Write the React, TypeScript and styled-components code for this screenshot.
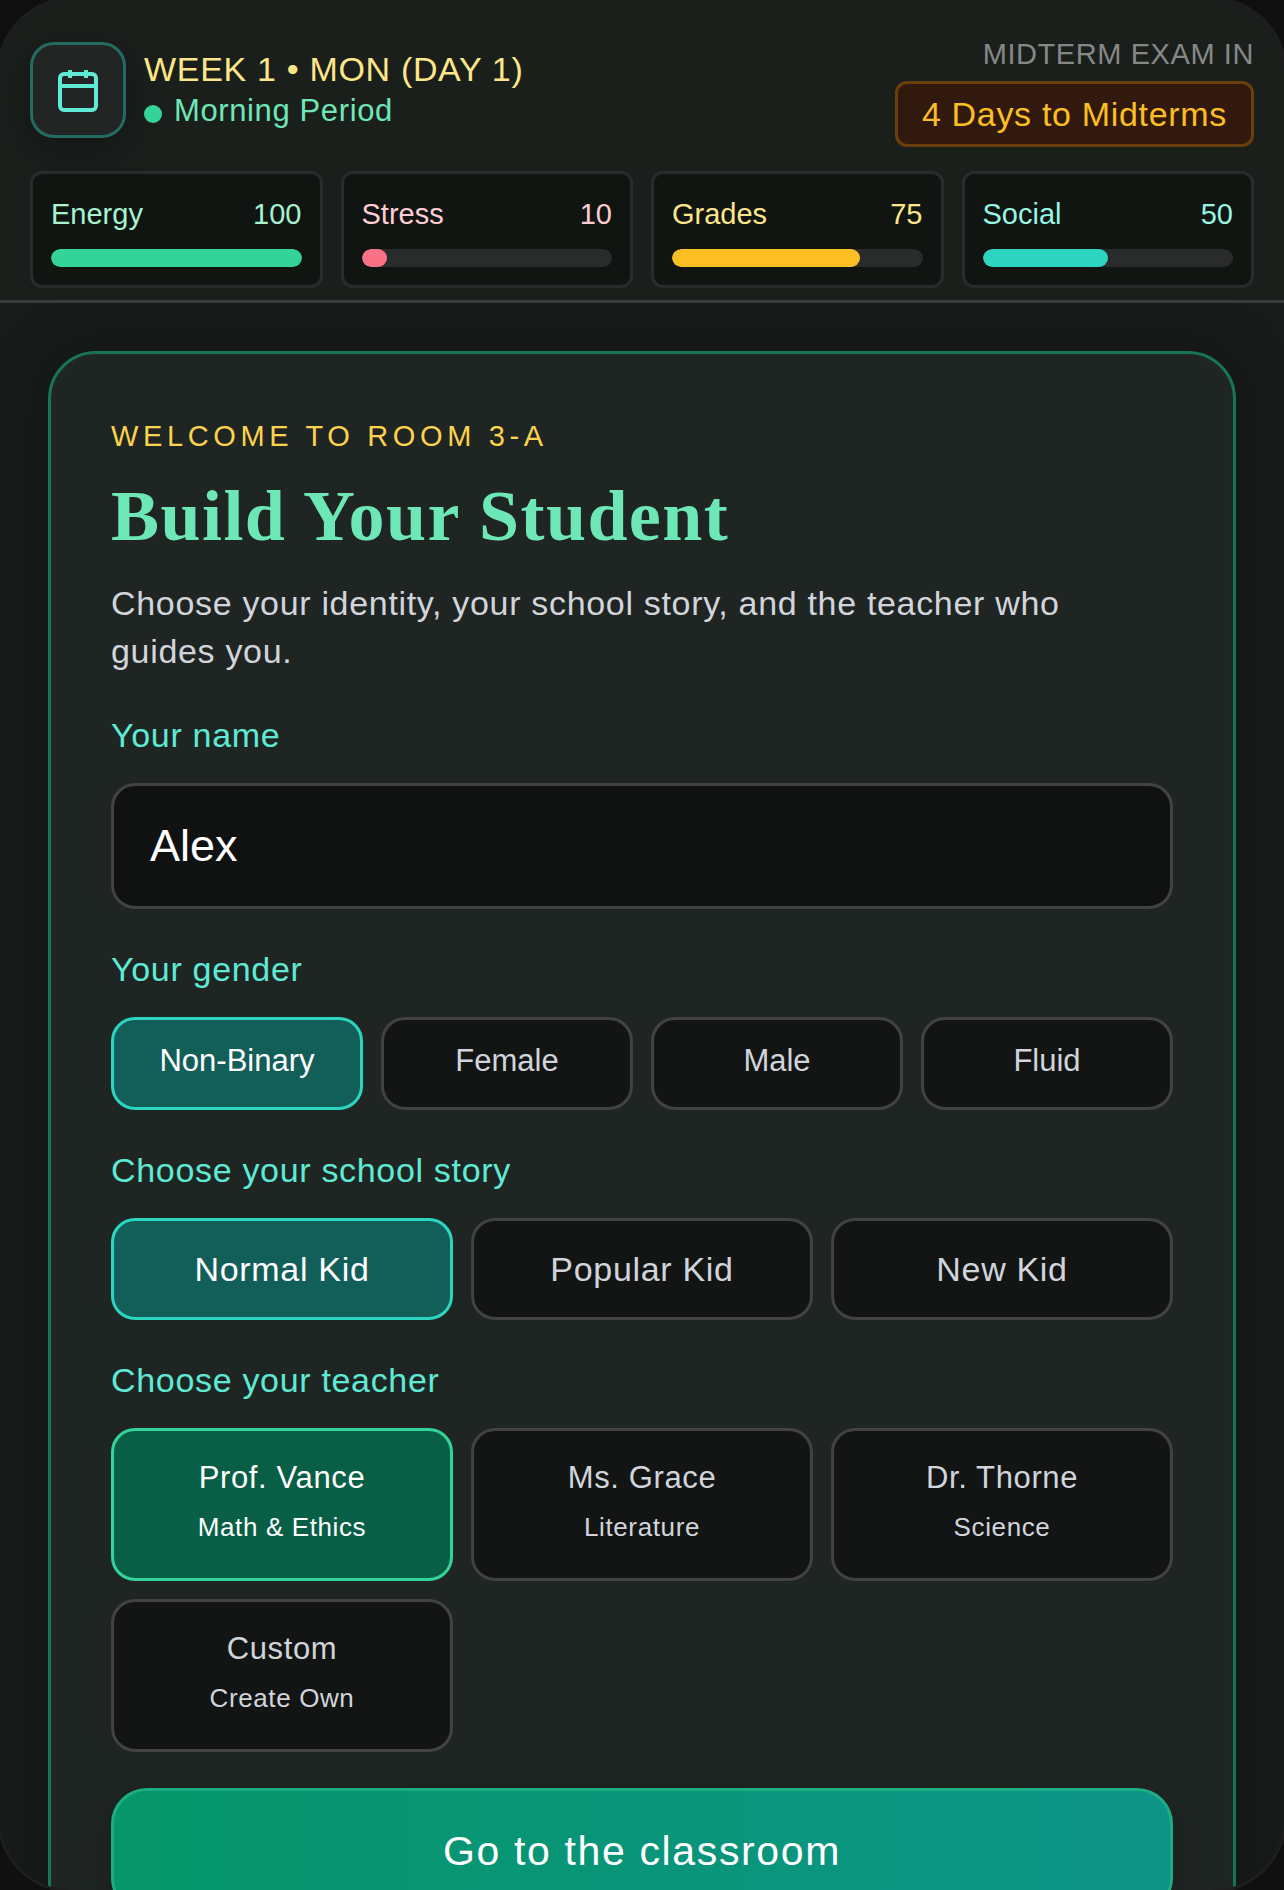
import React, { useState } from "react";
import styled, { createGlobalStyle } from "styled-components";
import { Calendar } from "lucide-react";

const sans = `"Liberation Sans", Arial, sans-serif`;
const serif = `"Liberation Serif", "Times New Roman", serif`;
const tracking = "0.02em";

const GlobalStyle = createGlobalStyle`
  *, *::before, *::after { box-sizing: border-box; }
  body {
    margin: 0;
    background: #0f0f0f;
    font-family: ${sans};
    color: #d1d5db;
  }
  button, input { font-family: inherit; }
`;

const Frame = styled.div`
  display: flex;
  flex-direction: column;
  height: 100vh;
  overflow: hidden;
  border-radius: 72px;
  background: #171b1a;
  box-shadow: 0 0 0 3px #1f1e1e;
`;

const Header = styled.header`
  flex: none;
  display: flex;
  flex-direction: column;
  gap: 24px;
  padding: 33px 30px 12px;
  border-bottom: 3px solid #3a3d3b;
  background: #1b1f1c;
`;

const HeaderRow = styled.div`
  display: flex;
  align-items: center;
  justify-content: space-between;
`;

const DateGroup = styled.div`
  display: flex;
  align-items: center;
  gap: 18px;
`;

const IconBox = styled.div`
  display: flex;
  align-items: center;
  justify-content: center;
  width: 96px;
  height: 96px;
  border: 3px solid #246b62;
  border-radius: 24px;
  background: #222523;
  color: #5eead4;
  box-shadow: 0 12px 36px rgba(0, 0, 0, 0.3);
`;

const WeekLine = styled.div`
  font-size: 34px;
  line-height: 42px;
  letter-spacing: ${tracking};
  color: #fde68a;
`;

const PeriodLine = styled.div`
  display: flex;
  align-items: center;
  gap: 12px;
  font-size: 31px;
  line-height: 42px;
  letter-spacing: ${tracking};
  color: #6ee7b7;
`;

const Dot = styled.span`
  width: 18px;
  height: 18px;
  margin-top: 6px;
  border-radius: 50%;
  background: #34d399;
`;

const ExamGroup = styled.div`
  display: flex;
  flex-direction: column;
  align-items: flex-end;
  gap: 6px;
`;

const ExamLabel = styled.div`
  font-size: 29px;
  line-height: 42px;
  letter-spacing: ${tracking};
  color: #868886;
`;

const ExamBadge = styled.div`
  padding: 6px 24px;
  border: 3px solid #6b3f0c;
  border-radius: 12px;
  background: #32190d;
  font-size: 34px;
  line-height: 48px;
  letter-spacing: ${tracking};
  color: #fbbf24;
`;

const Stats = styled.div`
  display: grid;
  grid-template-columns: repeat(4, 1fr);
  gap: 18px;
`;

const StatCard = styled.div`
  display: flex;
  flex-direction: column;
  gap: 12px;
  padding: 18px;
  border: 3px solid #2a2c2b;
  border-radius: 12px;
  background: #111512;
`;

const StatText = styled.div<{ $color: string }>`
  display: flex;
  justify-content: space-between;
  font-size: 29px;
  line-height: 45px;
  color: ${(p) => p.$color};
`;

const Track = styled.div`
  height: 18px;
  overflow: hidden;
  border-radius: 9px;
  background: #2a2b2b;
`;

const Fill = styled.div<{ $color: string }>`
  height: 100%;
  border-radius: 9px;
  background: ${(p) => p.$color};
`;

const Main = styled.main`
  flex: 1;
  min-height: 0;
  overflow: hidden;
  padding: 48px;
`;

const Card = styled.form`
  display: flex;
  flex-direction: column;
  gap: 36px;
  padding: 60px;
  border: 3px solid #187456;
  border-radius: 48px;
  background: #1f2523;
  box-shadow: 0 0 48px rgba(20, 18, 16, 0.7), inset 0 0 24px rgba(255, 255, 255, 0.02);
`;

const Eyebrow = styled.p`
  margin: 0 0 12px;
  font-size: 29px;
  line-height: 45px;
  letter-spacing: 0.16em;
  color: #fcd34d;
`;

const Title = styled.h1`
  margin: 0 0 18px;
  font-family: ${serif};
  font-size: 72px;
  line-height: 90px;
  letter-spacing: ${tracking};
  color: #6ee7b7;
`;

const Intro = styled.p`
  margin: 0;
  font-size: 34px;
  line-height: 48px;
  letter-spacing: ${tracking};
`;

const Field = styled.fieldset`
  min-width: 0;
  margin: 0;
  padding: 0;
  border: 0;
`;

const labelText = `
  display: block;
  margin: 0 0 24px;
  padding: 0;
  font-size: 34px;
  line-height: 48px;
  letter-spacing: ${tracking};
  color: #5eead4;
`;
const Label = styled.label`${labelText}`;
const Legend = styled.legend`${labelText}`;

const NameInput = styled.input`
  display: block;
  width: 100%;
  height: 126px;
  padding: 0 36px;
  border: 3px solid #424242;
  border-radius: 24px;
  outline: none;
  background: #101211;
  font-size: 45px;
  color: #ffffff;
`;

const Options = styled.div<{ $columns: number }>`
  display: grid;
  grid-template-columns: repeat(${(p) => p.$columns}, 1fr);
  gap: 18px;
`;

const Option = styled.button<{ $active: boolean }>`
  padding: 24px 12px;
  border: 3px solid ${(p) => (p.$active ? "#2dd4bf" : "#424242")};
  border-radius: 24px;
  background: ${(p) => (p.$active ? "#125e59" : "#131514")};
  color: ${(p) => (p.$active ? "#ffffff" : "#d1d5db")};
  font-size: 34px;
  line-height: 48px;
  letter-spacing: ${tracking};
  cursor: pointer;
`;

const GenderOption = styled(Option)`
  padding: 18px 12px 24px;
  font-size: 31px;
  line-height: 45px;
  letter-spacing: normal;
`;

const TeacherOption = styled(Option)`
  display: flex;
  flex-direction: column;
  align-items: center;
  gap: 6px;
  padding: 24px 12px 30px;
  border-color: ${(p) => (p.$active ? "#34d399" : "#424242")};
  background: ${(p) => (p.$active ? "#085f46" : "#131514")};
  font-size: 31px;
  line-height: 45px;
`;

const Subject = styled.span`
  font-size: 26px;
  line-height: 42px;
`;

const SubmitButton = styled.button`
  padding: 33px 36px;
  border: 3px solid #1cae82;
  border-radius: 36px;
  background: linear-gradient(90deg, #059669, #0d9488);
  box-shadow: 0 12px 36px rgba(0, 0, 0, 0.15);
  font-size: 41px;
  line-height: 54px;
  letter-spacing: 0.04em;
  color: #ffffff;
  cursor: pointer;
`;

const stats = [
  { name: "Energy", value: 100, text: "#a7f3d0", bar: "#34d399" },
  { name: "Stress", value: 10, text: "#fecdd3", bar: "#fb7185" },
  { name: "Grades", value: 75, text: "#fde68a", bar: "#fbbf24" },
  { name: "Social", value: 50, text: "#99f6e4", bar: "#2dd4bf" },
];
const genders = ["Non-Binary", "Female", "Male", "Fluid"];
const stories = ["Normal Kid", "Popular Kid", "New Kid"];
const teachers = [
  { name: "Prof. Vance", subject: "Math & Ethics" },
  { name: "Ms. Grace", subject: "Literature" },
  { name: "Dr. Thorne", subject: "Science" },
  { name: "Custom", subject: "Create Own" },
];

export default function App() {
  const [name, setName] = useState("Alex");
  const [gender, setGender] = useState(genders[0]);
  const [story, setStory] = useState(stories[0]);
  const [teacher, setTeacher] = useState(teachers[0].name);

  return (
    <>
      <GlobalStyle />
      <Frame>
        <Header>
          <HeaderRow>
            <DateGroup>
              <IconBox>
                <Calendar size={48} strokeWidth={2} strokeLinecap="butt" aria-hidden />
              </IconBox>
              <div>
                <WeekLine>WEEK 1 • MON (DAY 1)</WeekLine>
                <PeriodLine>
                  <Dot />
                  Morning Period
                </PeriodLine>
              </div>
            </DateGroup>
            <ExamGroup>
              <ExamLabel>MIDTERM EXAM IN</ExamLabel>
              <ExamBadge>4 Days to Midterms</ExamBadge>
            </ExamGroup>
          </HeaderRow>
          <Stats>
            {stats.map((s) => (
              <StatCard key={s.name}>
                <StatText $color={s.text}>
                  <span>{s.name}</span>
                  <span>{s.value}</span>
                </StatText>
                <Track>
                  <Fill $color={s.bar} style={{ width: `${s.value}%` }} />
                </Track>
              </StatCard>
            ))}
          </Stats>
        </Header>
        <Main>
          <Card onSubmit={(e) => e.preventDefault()}>
            <div>
              <Eyebrow>WELCOME TO ROOM 3-A</Eyebrow>
              <Title>Build Your Student</Title>
              <Intro>
                Choose your identity, your school story, and the teacher who guides you.
              </Intro>
            </div>
            <div>
              <Label htmlFor="student-name">Your name</Label>
              <NameInput
                id="student-name"
                type="text"
                value={name}
                onChange={(e) => setName(e.target.value)}
              />
            </div>
            <Field>
              <Legend>Your gender</Legend>
              <Options $columns={4}>
                {genders.map((g) => (
                  <GenderOption
                    key={g}
                    type="button"
                    $active={g === gender}
                    aria-pressed={g === gender}
                    onClick={() => setGender(g)}
                  >
                    {g}
                  </GenderOption>
                ))}
              </Options>
            </Field>
            <Field>
              <Legend>Choose your school story</Legend>
              <Options $columns={3}>
                {stories.map((s) => (
                  <Option
                    key={s}
                    type="button"
                    $active={s === story}
                    aria-pressed={s === story}
                    onClick={() => setStory(s)}
                  >
                    {s}
                  </Option>
                ))}
              </Options>
            </Field>
            <Field>
              <Legend>Choose your teacher</Legend>
              <Options $columns={3}>
                {teachers.map((t) => (
                  <TeacherOption
                    key={t.name}
                    type="button"
                    $active={t.name === teacher}
                    aria-pressed={t.name === teacher}
                    onClick={() => setTeacher(t.name)}
                  >
                    <span>{t.name}</span>
                    <Subject>{t.subject}</Subject>
                  </TeacherOption>
                ))}
              </Options>
            </Field>
            <SubmitButton type="submit">Go to the classroom</SubmitButton>
          </Card>
        </Main>
      </Frame>
    </>
  );
}
